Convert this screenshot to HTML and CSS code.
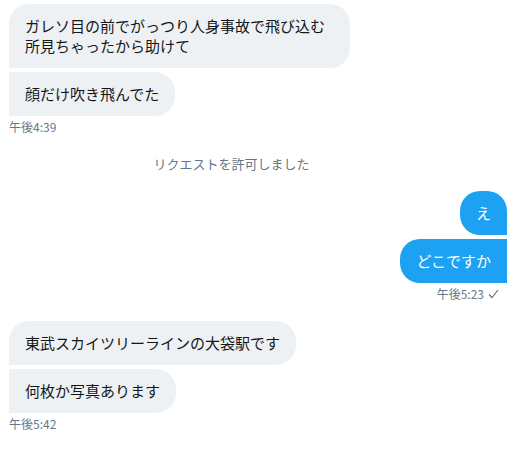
FILE: index.html
```html
<!DOCTYPE html>
<html lang="ja">
<head>
    <meta charset="UTF-8">
    <meta name="viewport" content="width=device-width, initial-scale=1.0">
    <title>メッセージ</title>
    <link rel="stylesheet" href="styles.css">
</head>
<body>
    <div class="chat">
        <div class="group received">
            <div class="bubble">ガレソ目の前でがっつり人身事故で飛び込む所見ちゃったから助けて</div>
            <div class="bubble">顔だけ吹き飛んでた</div>
            <div class="time">午後4:39</div>
        </div>

        <div class="notice">リクエストを許可しました</div>

        <div class="group sent">
            <div class="bubble">え</div>
            <div class="bubble">どこですか</div>
            <div class="time">午後5:23
                <svg class="check" width="11" height="10" viewBox="0 0 11 10">
                    <polyline points="1,5.5 4,8.5 10,1" fill="none" stroke="#657786" stroke-width="1.2"/>
                </svg>
            </div>
        </div>

        <div class="group received second">
            <div class="bubble">東武スカイツリーラインの大袋駅です</div>
            <div class="bubble">何枚か写真あります</div>
            <div class="time">午後5:42</div>
        </div>
    </div>
</body>
</html>
```

FILE: styles.css
```css
body {
    margin: 0;
    background-color: #fff;
    font-family: "Noto Sans CJK JP", "Noto Sans", sans-serif;
    color: #14171a;
}

.chat {
    padding: 4px 12px 0 9px;
}

.group {
    display: flex;
    flex-direction: column;
    gap: 4px;
}

.received {
    align-items: flex-start;
}

.sent {
    align-items: flex-end;
    margin-top: 18px;
}

.second {
    margin-top: 19px;
}

.bubble {
    box-sizing: border-box;
    max-width: 341px;
    padding: 12px 16px;
    font-size: 15px;
    line-height: 20px;
    border-radius: 20px;
}

.received .bubble {
    background-color: #eef1f3;
    border-bottom-left-radius: 0;
}

.received .bubble + .bubble {
    border-top-left-radius: 0;
}

.sent .bubble {
    background-color: #1da1f2;
    color: #fff;
    border-bottom-right-radius: 0;
}

.sent .bubble + .bubble {
    border-top-right-radius: 0;
}

.time {
    margin-top: -1px;
    font-size: 12px;
    line-height: 16px;
    color: #657786;
}

.sent .time {
    display: flex;
    align-items: center;
    gap: 4px;
    padding-right: 8px;
}

.notice {
    margin-top: 20px;
    padding-right: 53px;
    text-align: center;
    font-size: 13px;
    line-height: 18px;
    color: #657786;
}
```
